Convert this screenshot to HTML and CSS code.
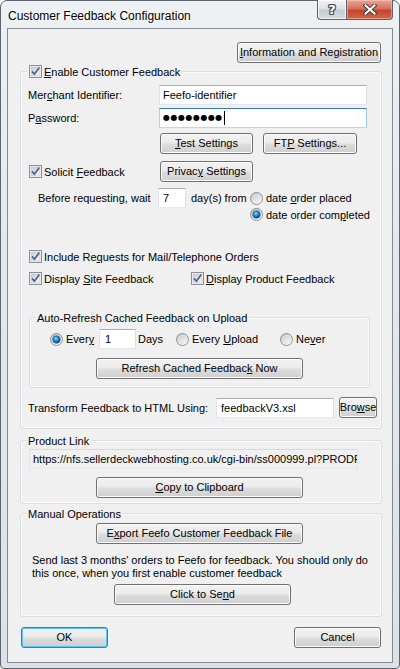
FILE: index.html
```html
<!DOCTYPE html>
<html>
<head>
<meta charset="utf-8">
<link rel="stylesheet" href="styles.css">
</head>
<body>
<svg class="defs" width="0" height="0" aria-hidden="true">
  <defs>
    <linearGradient id="cbg" x1="0" y1="0" x2="1" y2="1">
      <stop offset="0" stop-color="#c8ccd2"/>
      <stop offset="1" stop-color="#f7f7f7"/>
    </linearGradient>
    <linearGradient id="rbg" x1="0.2" y1="0.1" x2="0.8" y2="0.9">
      <stop offset="0" stop-color="#c4c8cd"/>
      <stop offset="1" stop-color="#fbfbfb"/>
    </linearGradient>
    <radialGradient id="dot" cx="0.42" cy="0.38" r="0.65">
      <stop offset="0" stop-color="#9be3ff"/>
      <stop offset="0.45" stop-color="#1d8ad6"/>
      <stop offset="1" stop-color="#0b3a6c"/>
    </radialGradient>
    <symbol id="cb" viewBox="0 0 13 13">
      <rect x="0.5" y="0.5" width="12" height="12" fill="#fdfdfd" stroke="#8e8f8f"/>
      <rect x="2" y="2" width="9" height="9" fill="url(#cbg)" stroke="#b8bcc2" stroke-width="0.6"/>
      <path d="M3 6.4 5.4 9.2 10.3 2.6" fill="none" stroke="#4c5f92" stroke-width="1.7"/>
    </symbol>
    <symbol id="rb" viewBox="0 0 13 13">
      <circle cx="6.5" cy="6.5" r="6" fill="url(#rbg)" stroke="#8e8f8f"/>
      <circle cx="6.5" cy="6.5" r="4" fill="none" stroke="#e6e6e6" stroke-width="0.6"/>
    </symbol>
    <symbol id="rbon" viewBox="0 0 13 13">
      <circle cx="6.5" cy="6.5" r="6" fill="url(#rbg)" stroke="#8e8f8f"/>
      <circle cx="6.5" cy="6.5" r="3.8" fill="url(#dot)" stroke="#2a5a90" stroke-width="0.6"/>
    </symbol>
  </defs>
</svg>

<div class="window">
  <div class="titlebar">
    <span class="title">Customer Feedback Configuration</span>
    <div class="caption-btns">
      <span class="cap help">?</span>
      <span class="cap close">
        <svg width="14" height="11" viewBox="0 0 14 11">
          <path d="M2.5 1.5 11.5 9.5M11.5 1.5 2.5 9.5" stroke="#3d3f44" stroke-width="4" stroke-linecap="square"/>
          <path d="M2.5 1.5 11.5 9.5M11.5 1.5 2.5 9.5" stroke="#ffffff" stroke-width="2" stroke-linecap="square"/>
        </svg>
      </span>
    </div>
  </div>

  <div class="client">
    <div class="toprow">
      <div class="btn w-info"><span><u>I</u>nformation and Registration</span></div>
    </div>

    <div class="group g-main">
      <div class="legend">
        <svg class="cb"><use href="#cb"/></svg>
        <span><u>E</u>nable Customer Feedback</span>
      </div>

      <div class="row r-merchant">
        <span class="lbl-col">Mer<u>c</u>hant Identifier:</span>
        <div class="edit w-field"><span>Feefo-identifier</span></div>
      </div>
      <div class="row r-pass">
        <span class="lbl-col">P<u>a</u>ssword:</span>
        <div class="edit w-field focus"><span class="dots">●●●●●●●●</span><span class="caret"></span></div>
      </div>
      <div class="row r-tests">
        <div class="btn w-test"><span><u>T</u>est Settings</span></div>
        <div class="btn w-ftp"><span>FT<u>P</u> Settings...</span></div>
      </div>
      <div class="row r-solicit">
        <div class="chk solicit-col">
          <svg class="cb"><use href="#cb"/></svg>
          <span>Solicit <u>F</u>eedback</span>
        </div>
        <div class="btn w-test"><span>Privac<u>y</u> Settings</span></div>
      </div>
      <div class="row r-wait">
        <span class="wait-lbl">Before requesting, wait</span>
        <div class="edit w-days"><span>7</span></div>
        <span class="from-lbl">day(s) from</span>
        <div class="chk">
          <svg class="rb"><use href="#rb"/></svg>
          <span>date <u>o</u>rder placed</span>
        </div>
      </div>
      <div class="row r-completed">
        <div class="chk">
          <svg class="rb"><use href="#rbon"/></svg>
          <span>date order com<u>p</u>leted</span>
        </div>
      </div>
      <div class="row r-include">
        <div class="chk">
          <svg class="cb"><use href="#cb"/></svg>
          <span>Include Re<u>q</u>uests for Mail/Telephone Orders</span>
        </div>
      </div>
      <div class="row r-display">
        <div class="chk site-col">
          <svg class="cb"><use href="#cb"/></svg>
          <span>Display <u>S</u>ite Feedback</span>
        </div>
        <div class="chk">
          <svg class="cb"><use href="#cb"/></svg>
          <span><u>D</u>isplay Product Feedback</span>
        </div>
      </div>

      <div class="group g-auto">
        <div class="legend lg-text"><span>Auto-Refresh Cached Feedback on Upload</span></div>
        <div class="row r-every">
          <div class="chk every-col">
            <svg class="rb"><use href="#rbon"/></svg>
            <span>Ever<u>y</u></span>
          </div>
          <div class="edit w-num"><span>1</span></div>
          <span class="days-lbl">Days</span>
          <div class="chk upload-col">
            <svg class="rb"><use href="#rb"/></svg>
            <span>Every <u>U</u>pload</span>
          </div>
          <div class="chk">
            <svg class="rb"><use href="#rb"/></svg>
            <span>Ne<u>v</u>er</span>
          </div>
        </div>
        <div class="btn w-wide refresh"><span>Refresh Cached Feedbac<u>k</u> Now</span></div>
      </div>

      <div class="row r-transform">
        <span class="transform-lbl">Transform Feedback to HTML Using:</span>
        <div class="edit w-xsl"><span>feedbackV3.xsl</span></div>
        <div class="btn w-browse"><span>Bro<u>w</u>se</span></div>
      </div>
    </div>

    <div class="group g-link">
      <div class="legend lg-text"><span>Product Link</span></div>
      <div class="edit readonly w-url"><span>https://nfs.sellerdeckwebhosting.co.uk/cgi-bin/ss000999.pl?PRODREF=</span></div>
      <div class="btn w-wide copy"><span><u>C</u>opy to Clipboard</span></div>
    </div>

    <div class="group g-manual">
      <div class="legend lg-text"><span>Manual Operations</span></div>
      <div class="btn w-wide export"><span>E<u>x</u>port Feefo Customer Feedback File</span></div>
      <p class="note">Send last 3 months' orders to Feefo for feedback. You should only do this once, when you first enable customer feedback</p>
      <div class="btn w-send"><span>Click to Se<u>n</u>d</span></div>
    </div>

    <div class="bottom">
      <div class="btn w-ok default"><span>OK</span></div>
      <div class="btn w-ok"><span>Cancel</span></div>
    </div>
  </div>
</div>
</body>
</html>
```

FILE: styles.css
```css
* { box-sizing: border-box; }

html, body {
  margin: 0;
  padding: 0;
}

body {
  width: 400px;
  height: 669px;
  overflow: hidden;
  background: #ffffff;
  font-family: "Liberation Sans", Arial, sans-serif;
  font-size: 11px;
  color: #000;
}

.defs {
  position: absolute;
  width: 0;
  height: 0;
  overflow: hidden;
}

u { text-decoration: underline; text-underline-offset: 1px; }

/* ---------- window frame ---------- */
.window {
  width: 400px;
  height: 669px;
  border: 1px solid #5d646d;
  border-radius: 7px 7px 4px 4px;
  background: linear-gradient(180deg, #eef1f4 0%, #e4e8ec 40%, #dde2e7 100%);
  display: flex;
  flex-direction: column;
}

.titlebar {
  height: 27px;
  flex: none;
  display: flex;
  justify-content: space-between;
  align-items: flex-start;
  padding: 0 6px 0 7px;
}

.title {
  margin-top: 8px;
  font-size: 12px;
  line-height: 15px;
  color: #000;
  text-shadow: 0 0 6px #ffffff, 0 0 3px #ffffff;
}

.caption-btns {
  display: flex;
  margin-top: -1px;
}

.cap {
  height: 20px;
  display: flex;
  align-items: center;
  justify-content: center;
  border: 1px solid #5a616b;
  border-top: none;
}

.help {
  width: 29px;
  border-right: none;
  border-radius: 0 0 0 4px;
  background: linear-gradient(180deg, #f1f3f5 0%, #dde1e5 45%, #c8cdd3 55%, #d6dadf 100%);
  box-shadow: inset 0 0 0 1px rgba(255,255,255,0.7);
  font-family: "DejaVu Sans", sans-serif;
  font-weight: bold;
  font-size: 13px;
  color: #ffffff;
  text-shadow: 1px 0 0 #474c55, -1px 0 0 #474c55, 0 1px 0 #474c55, 0 -1px 0 #474c55,
               1px 1px 0 #474c55, -1px -1px 0 #474c55, 1px -1px 0 #474c55, -1px 1px 0 #474c55;
}

.close {
  width: 47px;
  border-radius: 0 0 4px 0;
  background: linear-gradient(180deg, #eaa797 0%, #d66f58 45%, #c5442c 55%, #d5654c 100%);
  box-shadow: inset 0 0 0 1px rgba(255,210,200,0.5);
}

/* ---------- client area ---------- */
.client {
  margin-left: 6px;
  width: 386px;
  height: 635px;
  flex: none;
  border: 1px solid #858b93;
  background: #f0f0f0;
  padding: 13px 10px 0 12px;
}

.toprow {
  display: flex;
  justify-content: flex-end;
  padding-right: 1px;
}

/* ---------- controls ---------- */
.btn {
  height: 21px;
  flex: none;
  display: flex;
  align-items: center;
  justify-content: center;
  border: 1px solid #707070;
  border-radius: 3px;
  background: linear-gradient(180deg, #f2f2f2 0%, #ebebeb 48%, #dddddd 52%, #cfcfcf 100%);
  box-shadow: inset 0 0 0 1px #fbfbfb;
  white-space: nowrap;
  line-height: 13px;
}

.w-info { width: 144px; }

.btn.default {
  border-color: #3c7fb1;
  box-shadow: inset 0 0 0 1px #56c7f5;
}

.edit {
  height: 20px;
  flex: none;
  display: flex;
  align-items: center;
  border: 1px solid;
  border-color: #abadb3 #dbdfe6 #e3e9ef #e2e3ea;
  background: #ffffff;
  padding-left: 3px;
  white-space: nowrap;
  overflow: hidden;
}

.edit.focus {
  border-color: #3d7bad #a4c9e3 #b7d9ed #b5cfe7;
}

.edit.readonly {
  background: #f0f0f0;
  border-color: #d6d9dd #e2e4e7 #e6e8ea #e2e4e7;
}

.dots {
  font-family: "DejaVu Sans", sans-serif;
  font-size: 8px;
  letter-spacing: 0.5px;
  line-height: 10px;
}

.caret {
  width: 1px;
  height: 14px;
  background: #000;
  margin-left: 1px;
}

.chk {
  display: flex;
  align-items: center;
  gap: 2px;
  white-space: nowrap;
}

.cb, .rb {
  width: 13px;
  height: 13px;
  flex: none;
}

.chk .rb + span { margin-left: 1px; }

/* ---------- group boxes ---------- */
.group {
  border: 1px solid #d5dfe5;
  border-radius: 3px;
  box-shadow: inset 0 0 0 1px #fbfbfb;
}

.legend {
  display: flex;
  align-items: center;
  gap: 2px;
  width: max-content;
  height: 15px;
  margin: -8px 0 0 -1px;
  padding: 0 2px;
  background: #f0f0f0;
  white-space: nowrap;
}

.legend.lg-text {
  margin-left: 5px;
}

.g-main {
  margin-top: 8px;
  padding: 0 0 10px 7px;
}

.row {
  display: flex;
  align-items: center;
}

.lbl-col { width: 131px; flex: none; }
.w-field { width: 208px; }

.r-merchant { margin-top: 6px; height: 20px; }
.r-pass { margin-top: 3px; height: 20px; }

.r-tests { margin-top: 5px; height: 21px; padding-left: 132px; gap: 10px; }
.w-test { width: 93px; }
.w-ftp { width: 94px; }

.r-solicit { margin-top: 7px; height: 21px; padding-left: 1px; }
.solicit-col { width: 131px; flex: none; }

.r-wait { margin-top: 6px; height: 20px; padding-left: 10px; }
.wait-lbl { width: 120px; flex: none; }
.w-days { width: 28px; padding-left: 4px; }
.from-lbl { width: 59px; flex: none; margin-left: 5px; }

.r-completed { margin-top: -1px; height: 15px; padding-left: 222px; }

.r-include { margin-top: 27px; height: 15px; padding-left: 1px; }
.r-display { margin-top: 7px; height: 15px; padding-left: 1px; }
.site-col { width: 162px; flex: none; }

.g-auto {
  margin: 31px 0 0 1px;
  width: 341px;
  padding-bottom: 8px;
}

.r-every { margin-top: 4px; height: 20px; padding-left: 20px; }
.every-col { width: 49px; flex: none; }
.w-num { width: 37px; padding-left: 5px; }
.days-lbl { width: 38px; flex: none; margin-left: 2px; }
.upload-col { width: 104px; flex: none; }

.w-wide { width: 207px; }
.refresh { margin: 9px 0 0 66px; }

.r-transform { margin-top: 9px; height: 21px; }
.transform-lbl { width: 188px; flex: none; }
.w-xsl { width: 118px; padding-left: 4px; }
.w-browse { width: 38px; margin-left: 5px; }

.g-link {
  margin-top: 11px;
  padding-bottom: 5px;
}

.w-url {
  width: 329px;
  margin: 1px 0 0 8px;
  padding-left: 3px;
}

.copy { margin: 8px 0 0 75px; }

.g-manual {
  margin-top: 9px;
  padding-bottom: 11px;
}

.export { margin: 2px 0 0 75px; }

.note {
  margin: 10px 0 0 11px;
  width: 345px;
  line-height: 13px;
}

.w-send { width: 177px; margin: 4px 0 0 93px; }

.bottom {
  margin-top: 10px;
  display: flex;
  justify-content: space-between;
  padding: 0 1px;
}

.w-ok { width: 87px; }
```
